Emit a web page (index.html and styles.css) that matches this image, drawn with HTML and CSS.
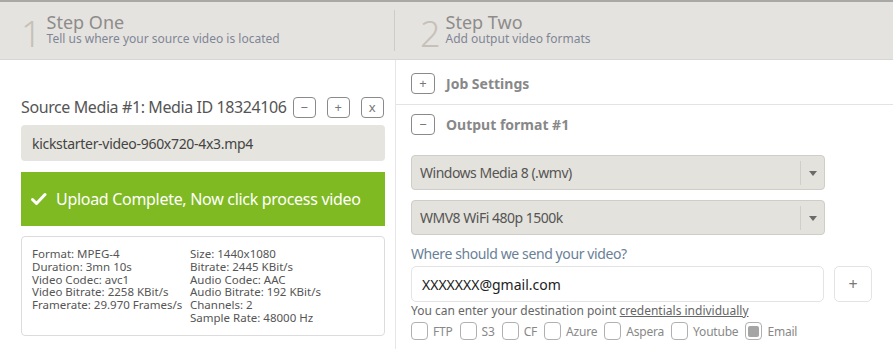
FILE: index.html
```html
<!DOCTYPE html>
<html>
<head>
<meta charset="utf-8">
<link rel="stylesheet" href="styles.css">
</head>
<body>
<header class="steps">
  <div class="step step-one">
    <span class="step-num">1</span>
    <div class="step-text">
      <div class="step-title">Step One</div>
      <div class="step-sub">Tell us where your source video is located</div>
    </div>
  </div>
  <div class="step step-two">
    <span class="step-num">2</span>
    <div class="step-text">
      <div class="step-title">Step Two</div>
      <div class="step-sub">Add output video formats</div>
    </div>
  </div>
</header>
<main class="cols">
  <section class="left">
    <div class="source-head">
      <span class="source-title">Source Media #1: Media ID 18324106</span>
      <span class="mini-btn">&minus;</span>
      <span class="mini-btn">+</span>
      <span class="mini-btn">x</span>
    </div>
    <div class="file-field">kickstarter-video-960x720-4x3.mp4</div>
    <div class="upload-done">
      <svg class="check" width="16" height="14" viewBox="0 0 16 14"><path d="M1.5 7.5 L5.5 11.5 L14 2.5" fill="none" stroke="#fff" stroke-width="3" stroke-linecap="round" stroke-linejoin="round"/></svg>
      <span>Upload Complete, Now click process video</span>
    </div>
    <div class="info-box">
      <div class="info-col info-col-a">
        <div>Format: MPEG-4</div>
        <div>Duration: 3mn 10s</div>
        <div>Video Codec: avc1</div>
        <div>Video Bitrate: 2258 KBit/s</div>
        <div>Framerate: 29.970 Frames/s</div>
      </div>
      <div class="info-col">
        <div>Size: 1440x1080</div>
        <div>Bitrate: 2445 KBit/s</div>
        <div>Audio Codec: AAC</div>
        <div>Audio Bitrate: 192 KBit/s</div>
        <div>Channels: 2</div>
        <div>Sample Rate: 48000 Hz</div>
      </div>
    </div>
  </section>
  <section class="right">
    <div class="acc-row acc-job">
      <span class="mini-btn">+</span>
      <span class="acc-title">Job Settings</span>
    </div>
    <div class="acc-row acc-output">
      <span class="mini-btn">&minus;</span>
      <span class="acc-title">Output format #1</span>
    </div>
    <div class="output-body">
      <div class="select">
        <span class="select-val">Windows Media 8 (.wmv)</span>
        <span class="select-arrow"></span>
      </div>
      <div class="select">
        <span class="select-val">WMV8 WiFi 480p 1500k</span>
        <span class="select-arrow"></span>
      </div>
      <div class="dest-label">Where should we send your video?</div>
      <div class="dest-row">
        <div class="dest-input">XXXXXXX@gmail.com</div>
        <div class="dest-add">+</div>
      </div>
      <div class="dest-note">You can enter your destination point <u>credentials individually</u></div>
      <div class="checks">
        <label class="chk"><span class="box"></span>FTP</label>
        <label class="chk"><span class="box"></span>S3</label>
        <label class="chk"><span class="box"></span>CF</label>
        <label class="chk"><span class="box"></span>Azure</label>
        <label class="chk"><span class="box"></span>Aspera</label>
        <label class="chk"><span class="box"></span>Youtube</label>
        <label class="chk"><span class="box on"></span>Email</label>
      </div>
    </div>
  </section>
</main>
</body>
</html>
```
FILE: styles.css
```css
* { box-sizing: border-box; }
html, body { margin: 0; padding: 0; }
body {
  width: 893px;
  height: 349px;
  overflow: hidden;
  background: #fff;
  font-family: "Noto Sans", "DejaVu Sans", sans-serif;
  color: #555;
}
.steps {
  display: flex;
  height: 60px;
  background: #e5e3df;
  border-top: 2px solid #a8a8a6;
  border-bottom: 1px solid #d8d6d2;
}
.step {
  display: flex;
  align-items: center;
  padding-left: 21px;
  height: 100%;
}
.step-one { width: 395px; position: relative; }
.step-one::after {
  content: "";
  position: absolute;
  right: 0; top: 8px; bottom: 8px;
  width: 1px;
  background: #cfccc7;
}
.step-two { padding-left: 25px; }
.step-num {
  font-size: 36px;
  line-height: 1;
  color: #c6c1b8;
  margin-right: 5px;
  margin-top: 6px;
  font-weight: 300;
}
.step-text { margin-top: -2px; }
.step-title {
  font-size: 18px;
  line-height: 19px;
  color: #8d8c8a;
}
.step-sub {
  font-size: 12px;
  line-height: 14px;
  color: #7f8696;
}
.cols { display: flex; }
.left {
  width: 396px;
  border-right: 1px solid #e6e6e6;
  padding: 36px 10px 0 21px;
  height: 290px;
}
.source-head {
  display: flex;
  align-items: center;
  height: 22px;
}
.source-title {
  font-size: 16px;
  letter-spacing: -0.4px;
  color: #555;
  margin-right: 6px;
  white-space: nowrap;
}
.mini-btn {
  flex-shrink: 0;
  display: inline-flex;
  align-items: center;
  justify-content: center;
  width: 23px;
  height: 21px;
  border: 1px solid #8a8a8a;
  border-radius: 4px;
  font-size: 13px;
  color: #777;
  line-height: 1;
}
.mini-btn + .mini-btn { margin-left: 11px; }
.file-field {
  margin-top: 7px;
  height: 36px;
  background: #e6e4de;
  border-radius: 4px;
  padding-left: 11px;
  display: flex;
  align-items: center;
  font-size: 14px;
  letter-spacing: -0.3px;
  color: #444;
}
.upload-done {
  margin-top: 11px;
  height: 54px;
  background: #7fba23;
  color: #fff;
  display: flex;
  align-items: center;
  padding-left: 10px;
  font-size: 16px;
  letter-spacing: -0.3px;
}
.check { margin-right: 9px; }
.info-box {
  margin-top: 10px;
  height: 100px;
  border: 1px solid #dcdcdc;
  border-radius: 4px;
  padding: 11px 10px 0 10px;
  display: flex;
  font-size: 11.5px;
  line-height: 12.8px;
  color: #555;
}
.info-col-a { width: 158px; white-space: nowrap; }
.info-col { white-space: nowrap; }
.right { flex: 1; }
.acc-row {
  display: flex;
  align-items: center;
  padding-left: 15px;
}
.acc-row .mini-btn { margin-right: 11px; width: 24px; }
.acc-job {
  height: 45px;
  border-bottom: 1px solid #e3e3e3;
  padding-top: 3px;
}
.acc-output { height: 41px; padding-bottom: 2px; }
.acc-title {
  font-size: 14px;
  font-weight: bold;
  color: #888;
}
.output-body { padding: 9px 0 0 15px; }
.select {
  width: 414px;
  height: 35px;
  background: #e4e2dc;
  border: 1px solid #cfcdc8;
  border-radius: 4px;
  display: flex;
  align-items: center;
  justify-content: space-between;
  margin-bottom: 10px;
}
.select-val {
  font-size: 14px;
  letter-spacing: -0.5px;
  color: #555;
  padding-left: 8px;
}
.select-arrow {
  width: 24px;
  height: 24px;
  border-left: 1px solid #d0cec9;
  position: relative;
}
.select-arrow::after {
  content: "";
  position: absolute;
  left: 8px; top: 10px;
  border-left: 4px solid transparent;
  border-right: 4px solid transparent;
  border-top: 5px solid #6a6a6a;
}
.dest-label {
  font-size: 14px;
  letter-spacing: -0.4px;
  color: #6a7f98;
  margin-top: 7px;
  line-height: 17px;
}
.dest-row { display: flex; margin-top: 4px; }
.dest-input {
  width: 413px;
  height: 36px;
  border: 1px solid #e4e4e4;
  border-radius: 5px;
  display: flex;
  align-items: center;
  padding-left: 10px;
  font-size: 14px;
  color: #222;
}
.dest-add {
  margin-left: 10px;
  width: 38px;
  height: 36px;
  border: 1px solid #e4e4e4;
  border-radius: 5px;
  display: flex;
  align-items: center;
  justify-content: center;
  font-size: 16px;
  color: #777;
}
.dest-note {
  font-size: 12px;
  color: #666;
  line-height: 16px;
  margin-top: 1px;
}
.dest-note u { text-decoration-color: #666; }
.checks { display: flex; margin-top: 3px; align-items: center; }
.chk {
  display: flex;
  align-items: center;
  font-size: 12px;
  letter-spacing: -0.2px;
  color: #888;
  margin-right: 7px;
}
.box {
  width: 17px;
  height: 18px;
  border: 1px solid #b0b0b0;
  border-radius: 4px;
  margin-right: 5px;
  display: inline-flex;
  align-items: center;
  justify-content: center;
}
.box.on::after {
  content: "";
  width: 11px;
  height: 11px;
  background: #a5a5a5;
  border-radius: 2px;
}
```
